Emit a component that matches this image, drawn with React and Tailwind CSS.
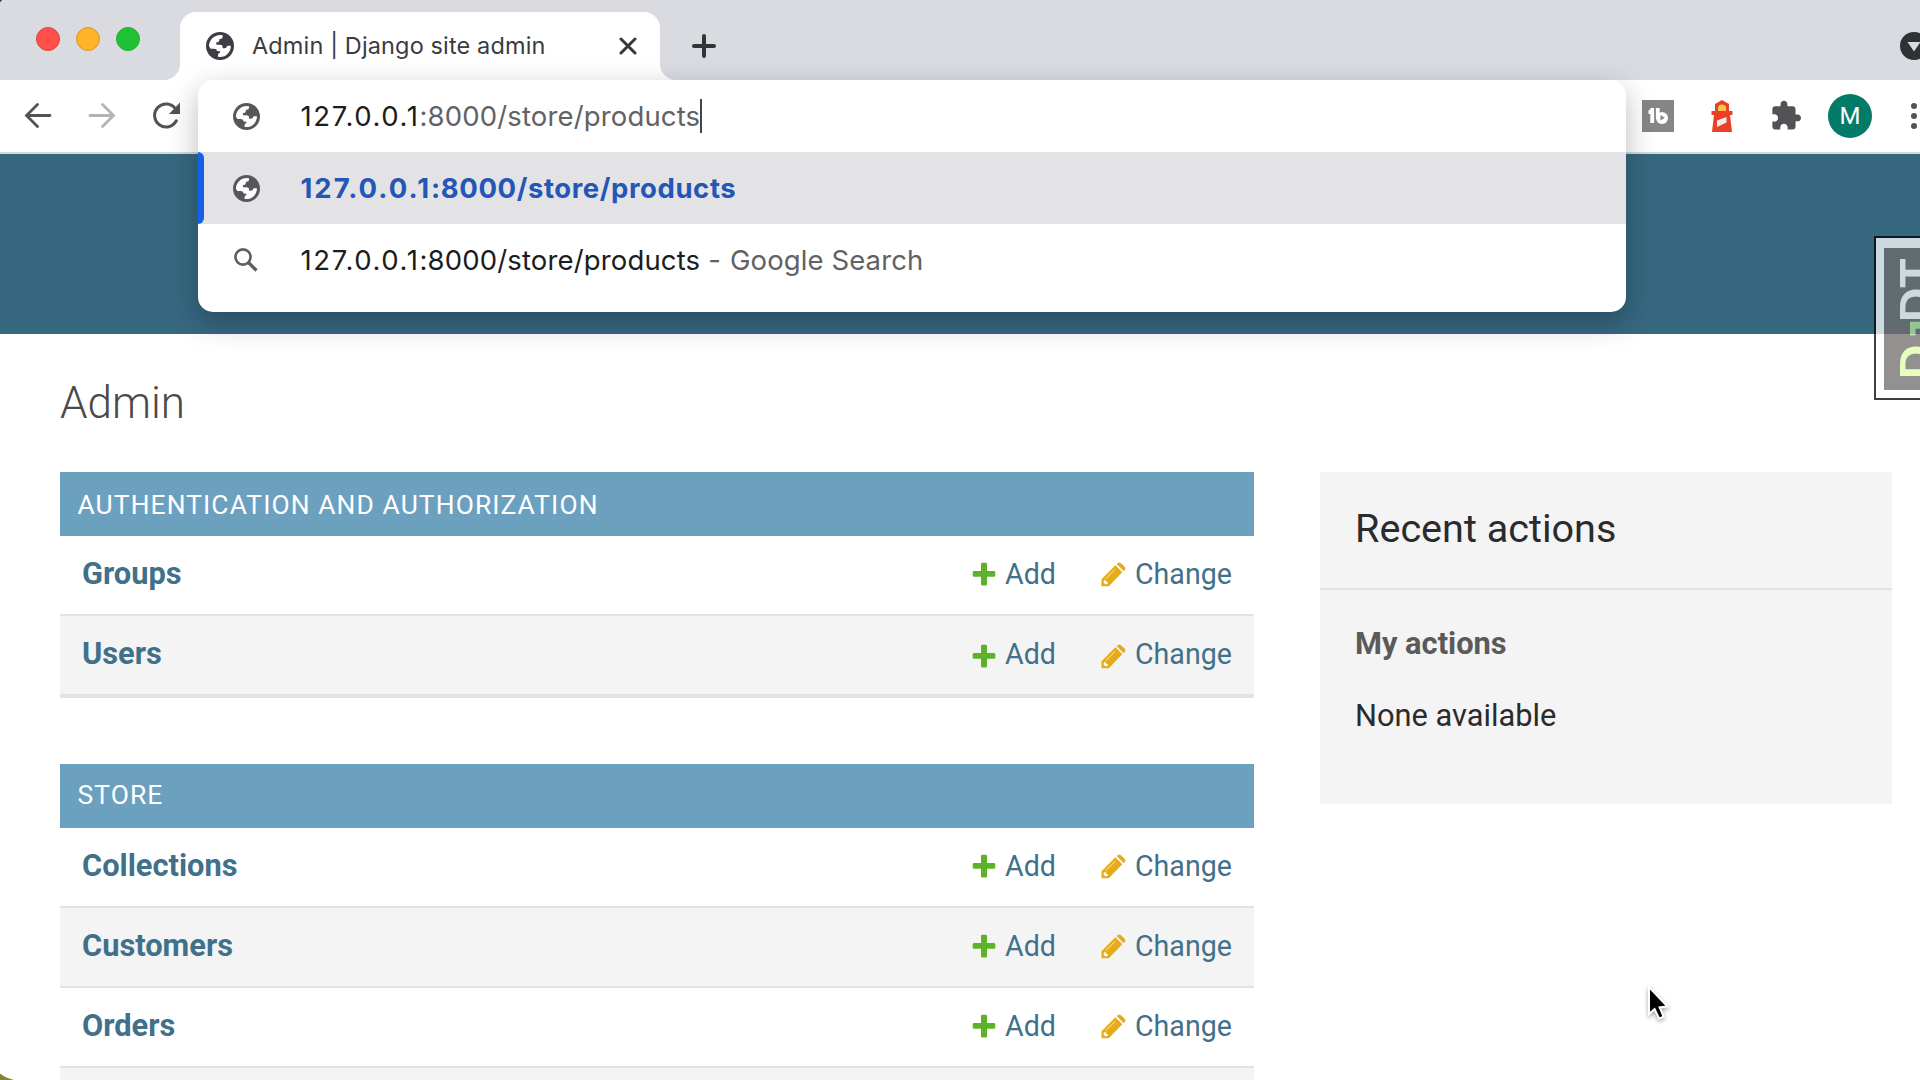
import React from "react";

function Globe({ className }) {
  return (
    <svg viewBox="0 0 84 84" className={className}>
      <circle cx="42" cy="42" r="42" fill="currentColor" />
      <path
        fill="#fff"
        d="M9 43C9 24 24 9 43 9L50 10V14Q50 21 43 21H40V25Q40 31 34 31H31V38H42Q50 38 50 45V49H55Q62 49 63 43L64 41H74.500C75 60 60 75 42 75L36 74.500V69Q36 63 42 62V58H37Q31 58 31 52L25 50H14Z"
      />
    </svg>
  );
}

function Plus() {
  return (
    <svg viewBox="0 0 24 24" className="size-6">
      <path
        fill="#5fb12a"
        d="M9 2Q9 .8 10.200 .8H13.800Q15 .8 15 2V9H22Q23.300 9 23.300 10.200V13.600Q23.300 14.800 22 14.800H15V22.200Q15 23.400 13.800 23.400H10.200Q9 23.400 9 22.200V14.800H2Q.7 14.800 .7 13.600V10.200Q.7 9 2 9H9Z"
      />
    </svg>
  );
}

function Pencil() {
  return (
    <svg viewBox="0 0 25 25" className="size-[25px]">
      <path
        fill="#e6ab18"
        d="M.5 17.200L14.400 3.300L21.300 10.200L7.800 24.300H.5ZM15.600 2.100L17 .9Q18.500 0 20 1.200L23.900 4.900Q25 6.500 23.900 7.900L22.500 9.100Z"
      />
      <path d="M4.600 16.800L14 7.500" stroke="#fbe7b4" strokeWidth="1" />
      <path d="M2.800 18.500L5 18.200L5.300 20L7 20.300L6.300 22.300H4.200L2.600 20.600Z" fill="#fff" />
    </svg>
  );
}

function Row({ name, alt, last }) {
  return (
    <div
      className={
        "flex shrink-0 border-[#e2e2e2] text-[#41708b] " +
        (alt ? "bg-[#f4f4f4] " : "bg-white ") +
        (last ? "h-[82px] border-b-4" : "h-20 border-b-2")
      }
    >
      <div className="flex-1 pl-[22px] text-[30.8px] leading-[75px] font-bold">{name}</div>
      <div className={"flex w-[33px] shrink-0 " + (last ? "pt-[28px]" : "pt-[26px]")}>
        <Plus />
      </div>
      <div className="w-[96px] shrink-0 text-[28.6px] leading-[76px]">Add</div>
      <div className={"w-[34px] shrink-0 " + (last ? "pt-[28px]" : "pt-[26px]")}>
        <Pencil />
      </div>
      <div className="w-[119px] shrink-0 text-[28.6px] leading-[76px]">Change</div>
    </div>
  );
}

function Caption({ children, className }) {
  return (
    <div
      className={
        "h-16 shrink-0 bg-[#6ca0bf] pl-[17.5px] text-[26.4px] leading-[62px] tracking-[1.1px] text-white " + className
      }
    >
      {children}
    </div>
  );
}

function TabStrip() {
  return (
    <div className="flex h-20 shrink-0 bg-[#dadbe0]">
      <div className="flex w-[164px] shrink-0 items-start gap-4 pt-[27px] pl-9">
        <i className="size-6 rounded-full border border-[#d8453f] bg-[#fe4f49]" />
        <i className="size-6 rounded-full border border-[#d5972c] bg-[#fdb426]" />
        <i className="size-6 rounded-full border border-[#22aa35] bg-[#1ec234]" />
      </div>
      <div className="flex items-end">
        <svg viewBox="0 0 16 16" className="size-4 text-white">
          <path fill="currentColor" d="M16 0V16H0A16 16 0 0 0 16 0Z" />
        </svg>
        <div className="flex h-[68px] w-[480px] items-center rounded-t-2xl bg-white pl-[26px]">
          <Globe className="size-7 shrink-0 text-[#3c3e43]" />
          <span className="ml-[18px] flex-1 font-[Inter] text-[23.500px] tracking-[0.13px] whitespace-nowrap text-[#3a3c40]">
            Admin | Django site admin
          </span>
          <svg viewBox="0 0 18 18" className="mr-[23px] size-[18px] text-[#36373a]">
            <path d="M2 2L16 16M16 2L2 16" stroke="currentColor" strokeWidth="3" strokeLinecap="round" />
          </svg>
        </div>
        <svg viewBox="0 0 16 16" className="size-4 text-white">
          <path fill="currentColor" d="M0 0V16H16A16 16 0 0 1 0 0Z" />
        </svg>
      </div>
      <svg viewBox="0 0 24 24" className="mt-[34px] ml-4 size-6 text-[#333438]">
        <path d="M12 2V22M2 12H22" stroke="currentColor" strokeWidth="4" strokeLinecap="round" />
      </svg>
      <div className="flex flex-1 justify-end">
        <svg viewBox="0 0 28 28" className="mt-8 -mr-2 size-7 shrink-0">
          <circle cx="14" cy="14" r="14" fill="#2f3135" />
          <path d="M7.500 10H20.500L14 19.500Z" fill="#dadbe0" />
        </svg>
      </div>
    </div>
  );
}

function Toolbar() {
  return (
    <div className="flex h-[74px] shrink-0 items-start border-b-2 border-[#d3d9e0] bg-white text-[#525356]">
      <svg viewBox="0 0 28 26" className="mt-[23px] ml-[24px] h-[26px] w-7 shrink-0">
        <path d="M26 12.500H3M13.500 1.500L2.500 12.500L13.500 23.500" fill="none" stroke="currentColor" strokeWidth="2.800" strokeLinecap="round" />
      </svg>
      <svg viewBox="0 0 28 26" className="mt-[23px] ml-[36px] h-[26px] w-7 shrink-0 text-[#b3b3b4]">
        <path d="M2 12.500H25M14.500 1.500L25.500 12.500L14.500 23.500" fill="none" stroke="currentColor" strokeWidth="2.800" strokeLinecap="round" />
      </svg>
      <svg viewBox="0 0 28 28" className="mt-[22px] ml-[37px] size-7 shrink-0">
        <path d="M23.300 18.800A11.500 11.500 0 1 1 22.300 6.600" fill="none" stroke="currentColor" strokeWidth="3" strokeLinecap="round" />
        <path d="M27 .6V12H16Z" fill="currentColor" />
      </svg>
      <div className="flex-1" />
      <div className="flex shrink-0 items-start">
        <div className="mt-5 flex size-8 items-center justify-center bg-[#868686]">
          <svg viewBox="0 0 20 18" className="h-[18px] w-5">
            <path d="M4.200 1V16M.5 5H5" fill="none" stroke="#fff" strokeWidth="3.800" />
            <path d="M9.800 1V12" stroke="#fff" strokeWidth="3.800" />
            <path d="M8 11A6 6 0 1 0 14 5Q11 5 8 8Z" fill="#fff" />
            <path d="M12.500 8L16.800 10.800L12.500 13.500Z" fill="#868686" />
          </svg>
        </div>
        <svg viewBox="0 0 22 32" className="mt-5 ml-[37px] h-8 w-[22px]">
          <path d="M11 0L18 4V11H21.500V15H19L21 32H1L3 15H.500V11H4V4Z" fill="#ea4025" />
          <path d="M7 11V8Q7 4.500 11 4.500Q15 4.500 15 8V11Z" fill="#fbc04e" />
          <path d="M6 20.500L15.500 17V22.500L6 27Z" fill="#f6e9e6" />
        </svg>
        <svg viewBox="1 .5 22 22.500" className="mt-5 ml-[38px] h-[31px] w-[30px]">
          <path
            fill="currentColor"
            d="M20.500 11H19V7c0-1.100-.9-2-2-2h-4V3.500C13 2.120 11.880 1 10.500 1S8 2.120 8 3.500V5H4c-1.100 0-1.990.9-1.990 2v3.800H3.500c1.490 0 2.700 1.210 2.700 2.700s-1.210 2.700-2.700 2.700H2V20c0 1.100.9 2 2 2h3.800v-1.500c0-1.490 1.210-2.700 2.700-2.700 1.490 0 2.700 1.210 2.700 2.700V22H17c1.100 0 2-.9 2-2v-4h1.500c1.380 0 2.500-1.120 2.500-2.500S21.880 11 20.500 11z"
          />
        </svg>
        <div className="mt-[14px] ml-[27px] flex size-11 items-center justify-center rounded-full bg-[#047b69] font-[Roboto] text-[24px] text-white">
          M
        </div>
        <div className="mt-[23px] mr-[3px] ml-[39px] flex flex-col gap-1">
          <i className="size-1.5 rounded-full bg-current" />
          <i className="size-1.5 rounded-full bg-current" />
          <i className="size-1.5 rounded-full bg-current" />
        </div>
      </div>
    </div>
  );
}

function Suggestions() {
  return (
    <div className="absolute top-20 left-[198px] flex h-[232px] w-[1428px] flex-col rounded-[15px] bg-white font-[Inter] text-[27.500px] whitespace-nowrap text-[#1c1c1d] shadow-[0_10px_30px_rgba(0,0,0,0.27)]">
      <div className="flex h-[72px] items-center pl-[34.5px]">
        <Globe className="size-[27px] text-[#55575a]" />
        <span className="ml-[41px] pt-0.5">
          <span className="tracking-[1.6px]">127.0.0.1</span>
          <span className="tracking-[0.15px] text-[#626263]">:8000/store/products</span>
        </span>
        <i className="h-[34px] w-0.5 bg-[#444]" />
      </div>
      <div className="flex h-[72px] items-center bg-[#e3e3e5]">
        <i className="h-full w-1.5 rounded-r-md bg-[#1460e6]" />
        <Globe className="ml-[28.5px] size-[27px] text-[#55575a]" />
        <span className="ml-[41px] pt-0.5 font-bold text-[#2456b8]">
          <span className="tracking-[2px]">127.0.0.1</span>
          <span className="tracking-[0.58px]">:8000/store/products</span>
        </span>
      </div>
      <div className="flex h-[72px] items-center pl-[36px]">
        <svg viewBox="0 0 24 24" className="size-6 text-[#5c5d60]">
          <circle cx="9" cy="9" r="7.600" fill="none" stroke="currentColor" strokeWidth="2.600" />
          <path d="M14.500 14.500L22.500 22.500" stroke="currentColor" strokeWidth="3.200" />
        </svg>
        <span className="ml-[42.500px] pt-0.5">
          <span className="tracking-[1.6px]">127.0.0.1</span>
          <span className="tracking-[0.15px]">:8000/store/products</span>
          <span className="tracking-[0.1px] text-[#616264]">
            <span className="mr-[9px] ml-[8px]">-</span>
            Google Search
          </span>
        </span>
      </div>
    </div>
  );
}

function DebugHandle() {
  return (
    <div className="absolute top-[236px] right-0 h-[164px] w-[46px] overflow-hidden border-2 border-r-0 border-black bg-white pt-[10px] pl-2 opacity-75">
      <div className="h-[142px] w-9 overflow-hidden bg-[#706d6b]">
        <div className="mt-[10px] ml-[5px] flex w-14 rotate-180 text-[48px] leading-[56px] font-bold [font-family:'Liberation_Sans'] text-white [writing-mode:vertical-rl]">
          <span className="text-[#dfffa8]">D</span>
          <span className="relative right-[10px] -mt-[1px] -mb-[3px] text-[#b4e5a0]">J</span>
          <span>DT</span>
        </div>
      </div>
    </div>
  );
}

export default function App() {
  return (
    <div className="relative flex h-[1080px] w-[1920px] flex-col overflow-hidden bg-white font-[Roboto,sans-serif]">
      <TabStrip />
      <Toolbar />
      <div className="h-[180px] shrink-0 bg-[#366880]" />
      <h1 className="shrink-0 pl-[60px] text-[44px] leading-[138px] font-light text-[#4a4a4a]">Admin</h1>
      <div className="flex flex-1 items-start gap-[66px] pl-[60px]">
        <div className="flex h-[608px] w-[1194px] shrink-0 flex-col overflow-hidden">
          <Caption className="pt-0.5">AUTHENTICATION AND AUTHORIZATION</Caption>
          <Row name="Groups" />
          <Row name="Users" alt last />
          <div className="h-[66px] shrink-0" />
          <Caption>STORE</Caption>
          <Row name="Collections" />
          <Row name="Customers" alt />
          <Row name="Orders" />
          <div className="h-20 shrink-0 bg-[#f4f4f4]" />
        </div>
        <div className="h-[332px] w-[572px] shrink-0 bg-[#f4f4f4] text-[#2b2b2b]">
          <h2 className="h-[118px] border-b-2 border-[#e2e2e2] pl-[35px] text-[39.600px] leading-[113px]">
            Recent actions
          </h2>
          <h3 className="pl-[35px] text-[30.800px] leading-[107px] font-bold text-[#5a5a5a]">My actions</h3>
          <p className="pl-[35px] text-[30.800px] leading-[37px]">None available</p>
        </div>
      </div>
      <Suggestions />
      <DebugHandle />
      <svg viewBox="0 0 26 38" className="absolute top-[984px] left-[1646px] h-[38px] w-[26px] drop-shadow-[0_2px_2px_rgba(0,0,0,0.35)]">
        <path
          d="M3 3V30L8.600 25.200L13.200 34.600L17.600 32.600L13.600 23.400L21.500 22.500Z"
          fill="#000"
          stroke="#fff"
          strokeWidth="2"
        />
      </svg>
      <svg viewBox="0 0 16 8" className="absolute bottom-0 left-0 h-2 w-4">
        <path d="M0 1.500Q5 5.500 14 8H0Z" fill="#84862f" />
      </svg>
      <svg viewBox="0 0 3 3" className="absolute top-0 left-0 size-[3px]">
        <path d="M0 0H2.500Q.5 .5 0 2.500Z" fill="#333" />
      </svg>
    </div>
  );
}
